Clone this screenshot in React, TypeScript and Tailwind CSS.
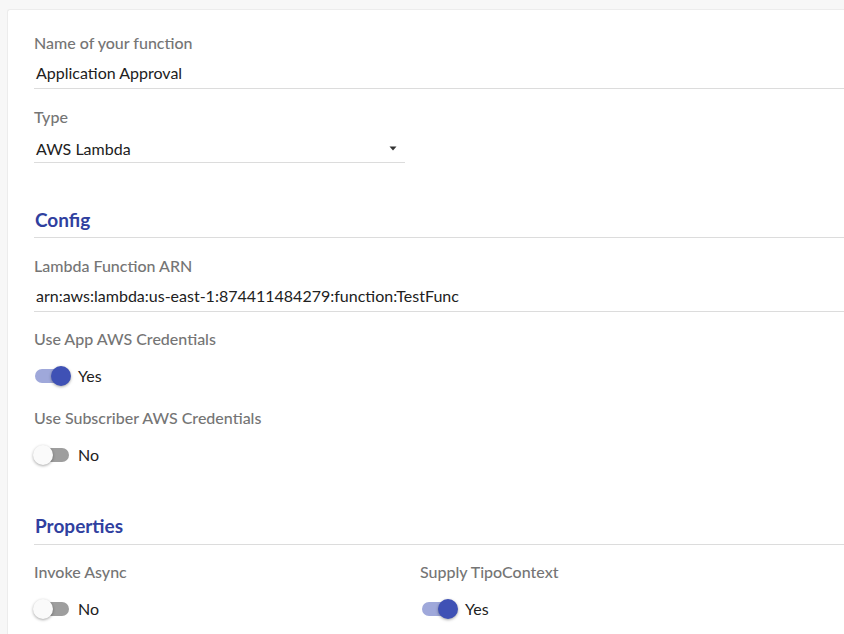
import React from "react";

const font = { fontFamily: "Lato, 'Noto Sans', sans-serif" };

function Label({ children }: { children: React.ReactNode }) {
  return (
    <div className="h-6 leading-6 text-[16px] font-medium text-[#757575] whitespace-nowrap">{children}</div>
  );
}

function Value({ children }: { children: React.ReactNode }) {
  return (
    <div className="relative h-[28px] border-b border-[#dcdcdc] pl-[2px] leading-6 text-[16px] text-[#212121] whitespace-nowrap">
      {children}
    </div>
  );
}

function SelectValue({ children }: { children: React.ReactNode }) {
  return (
    <div className="relative h-[26px] border-b border-[#dcdcdc] pl-[2px] leading-6 text-[16px] text-[#212121] whitespace-nowrap">
      {children}
      <svg className="absolute right-[8px] top-[9px]" width="8" height="5" viewBox="0 0 8 5">
        <path d="M0.5 0.5 L7.5 0.5 L4 4.5 Z" fill="#333" />
      </svg>
    </div>
  );
}

function Toggle({ on }: { on: boolean }) {
  return (
    <div className="h-[38px] flex items-center">
      <div className="relative w-[34px] h-[14px] ml-px">
        <div className={`absolute inset-0 rounded-full ${on ? "bg-[#9fa8da]" : "bg-[#9e9e9e]"}`} />
        <div
          className={`absolute top-[-3px] w-[20px] h-[20px] rounded-full shadow-[0_1px_3px_rgba(0,0,0,0.35)] ${
            on ? "left-[16px] bg-[#3f51b5]" : "left-[-2px] bg-[#fafafa]"
          }`}
        />
      </div>
      <span className="ml-[9px] text-[16px] text-[#212121]">{on ? "Yes" : "No"}</span>
    </div>
  );
}

function Heading({ children }: { children: React.ReactNode }) {
  return (
    <div className="h-[30px] border-b border-[#dcdcdc] pl-px">
      <div className="h-6 leading-6 text-[19px] font-bold text-[#303f9f]">{children}</div>
    </div>
  );
}

export default function App() {
  return (
    <div className="w-[844px] h-[634px] overflow-hidden bg-[#f7f7f7] pt-[9px] pl-[7px]" style={font}>
      <div className="w-[900px] h-[700px] bg-white border-l border-t border-[#ececec] rounded-tl-[3px] pl-[26px] pt-[21px]">
        <Label>Name of your function</Label>
        <div className="mt-[6px]">
          <Value>Application Approval</Value>
        </div>
        <div className="mt-[16px]">
          <Label>Type</Label>
        </div>
        <div className="mt-[8px] w-[371px]">
          <SelectValue>AWS Lambda</SelectValue>
        </div>

        <div className="mt-[45px]">
          <Heading>Config</Heading>
        </div>
        <div className="mt-[16px]">
          <Label>Lambda Function ARN</Label>
        </div>
        <div className="mt-[6px]">
          <Value>arn:aws:lambda:us-east-1:874411484279:function:TestFunc</Value>
        </div>
        <div className="mt-[15px]">
          <Label>Use App AWS Credentials</Label>
        </div>
        <div className="mt-[6px]">
          <Toggle on />
        </div>
        <div className="mt-[11px]">
          <Label>Use Subscriber AWS Credentials</Label>
        </div>
        <div className="mt-[6px]">
          <Toggle on={false} />
        </div>

        <div className="mt-[40px]">
          <div className="h-[31px] border-b border-[#dcdcdc] pl-px">
            <div className="h-6 leading-6 text-[19px] font-bold text-[#303f9f]">Properties</div>
          </div>
        </div>
        <div className="mt-[15px] grid grid-cols-[386px_1fr]">
          <div>
            <Label>Invoke Async</Label>
            <div className="mt-[6px]">
              <Toggle on={false} />
            </div>
          </div>
          <div>
            <Label>Supply TipoContext</Label>
            <div className="mt-[6px] ml-[1px]">
              <Toggle on />
            </div>
          </div>
        </div>
      </div>
    </div>
  );
}
